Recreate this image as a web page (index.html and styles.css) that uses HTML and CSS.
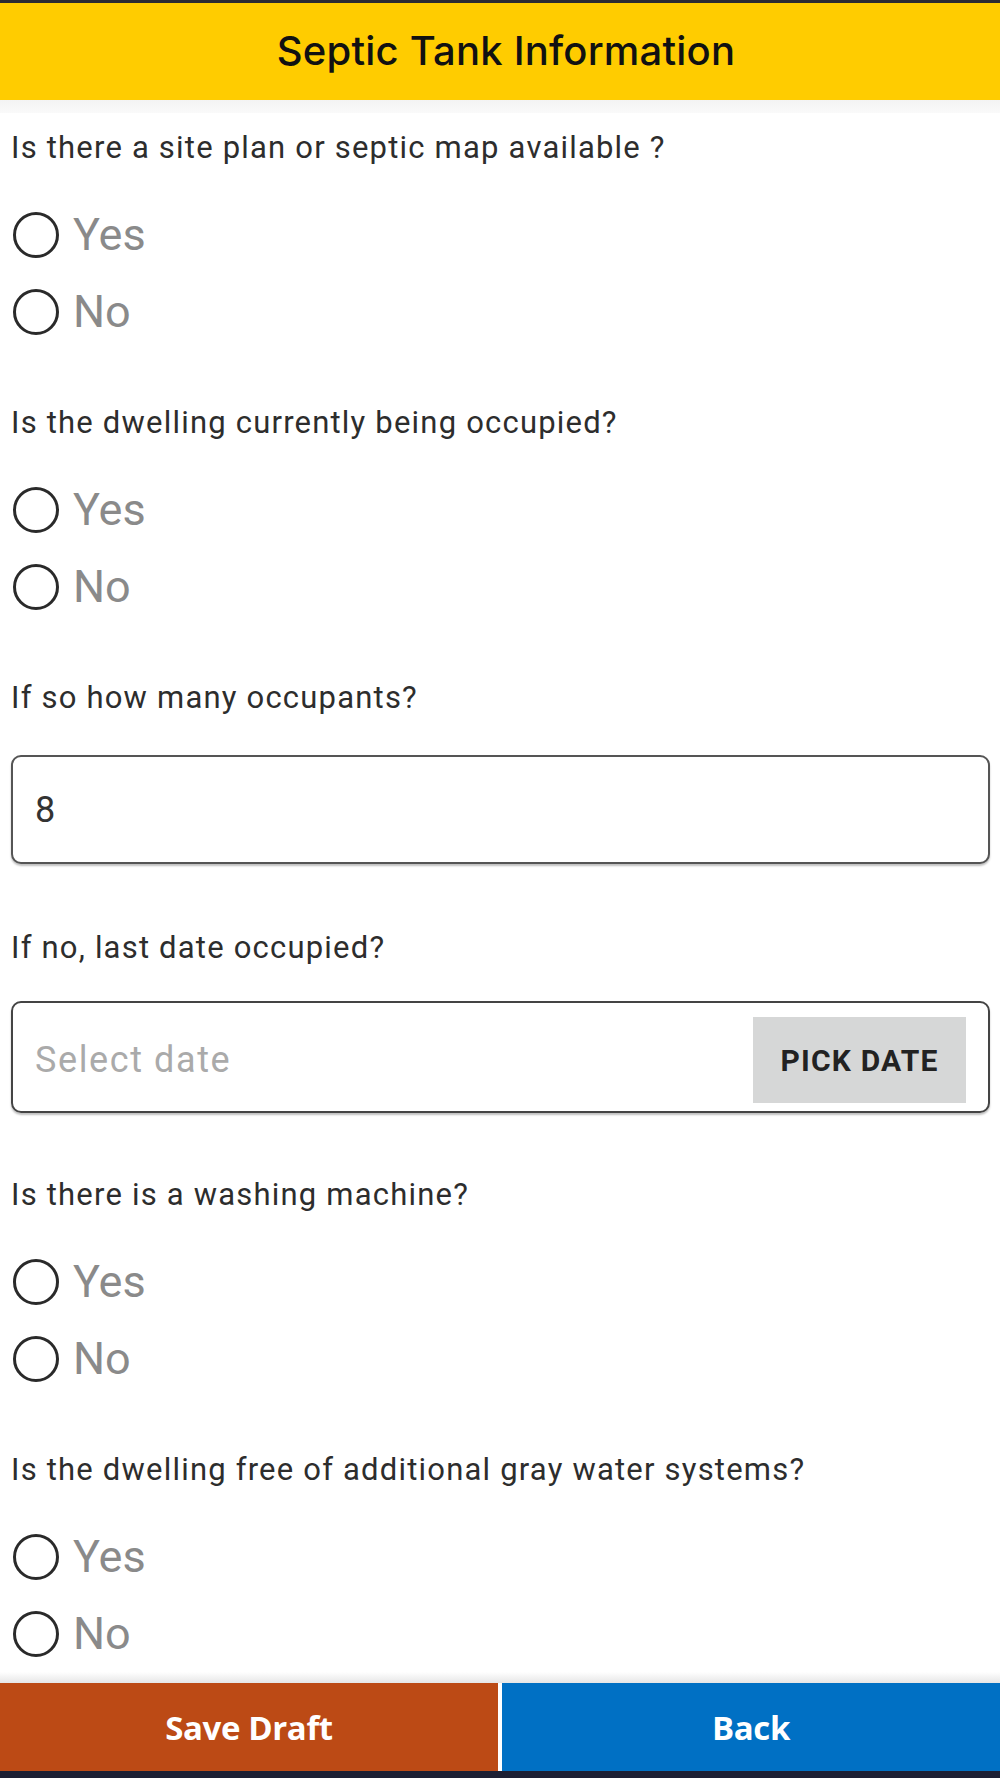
FILE: index.html
```html
<!DOCTYPE html>
<html lang="en">
<head>
    <meta charset="UTF-8">
    <meta name="viewport" content="width=device-width, initial-scale=1.0">
    <title>Septic Tank Information</title>
    <link rel="stylesheet" href="styles.css">
</head>
<body>
    <div class="screen">
        <div class="status-edge"></div>
        <header class="title-bar">
            <h1>Septic Tank Information</h1>
        </header>
        <div class="title-shade"></div>

        <main class="form">
            <div class="field">
                <p class="question">Is there a site plan or septic map available ?</p>
                <label class="option"><input type="radio" name="sitePlan" value="yes"><span>Yes</span></label>
                <label class="option"><input type="radio" name="sitePlan" value="no"><span>No</span></label>
            </div>

            <div class="field">
                <p class="question">Is the dwelling currently being occupied?</p>
                <label class="option"><input type="radio" name="occupied" value="yes"><span>Yes</span></label>
                <label class="option"><input type="radio" name="occupied" value="no"><span>No</span></label>
            </div>

            <div class="field field-input">
                <p class="question">If so how many occupants?</p>
                <input type="text" class="text-box" value="8">
            </div>

            <div class="field field-date">
                <p class="question">If no, last date occupied?</p>
                <div class="date-box">
                    <span class="placeholder">Select date</span>
                    <button type="button" class="pick-date">PICK DATE</button>
                </div>
            </div>

            <div class="field field-after-box">
                <p class="question">Is there is a washing machine?</p>
                <label class="option"><input type="radio" name="washer" value="yes"><span>Yes</span></label>
                <label class="option"><input type="radio" name="washer" value="no"><span>No</span></label>
            </div>

            <div class="field">
                <p class="question">Is the dwelling free of additional gray water systems?</p>
                <label class="option"><input type="radio" name="grayWater" value="yes"><span>Yes</span></label>
                <label class="option"><input type="radio" name="grayWater" value="no"><span>No</span></label>
            </div>
        </main>

        <div class="footer-shade"></div>
        <footer class="actions">
            <button type="button" class="btn btn-draft">Save Draft</button>
            <button type="button" class="btn btn-back">Back</button>
        </footer>
        <div class="nav-edge"></div>
    </div>
</body>
</html>
```

FILE: styles.css
```css
* {
    box-sizing: border-box;
}

body {
    margin: 0;
    font-family: Roboto, "Liberation Sans", sans-serif;
    background: #fff;
    color: #333;
}

.screen {
    display: flex;
    flex-direction: column;
    height: 100vh;
    overflow: hidden;
}

.status-edge {
    height: 3px;
    background: #2b2b33;
}

.title-bar {
    height: 97px;
    padding-left: 12px;
    background: #ffcc00;
    display: flex;
    align-items: center;
    justify-content: center;
}

.title-bar h1 {
    margin: 0;
    font-family: Inter, "Noto Sans", sans-serif;
    font-weight: 500;
    font-size: 40px;
    letter-spacing: 0.2px;
    color: #111;
    padding-bottom: 2px;
}

.title-shade {
    height: 13px;
    background: linear-gradient(#f3f3f3, #fafafa);
}

.form {
    flex: 1;
    overflow: hidden;
    padding: 15px 10px 0 11px;
}

.field + .field {
    margin-top: 53px;
}

.field-date {
    margin-top: 64px !important;
}

.field-after-box {
    margin-top: 62px !important;
}

.question {
    margin: 0 0 28px;
    font-size: 31px;
    letter-spacing: 1.2px;
    line-height: 40px;
    color: #2d2d2d;
}

.field-input .question {
    margin-bottom: 37px;
}

.field-date .question {
    margin-bottom: 33px;
}

.option {
    display: flex;
    align-items: center;
    height: 77px;
    margin-left: 2px;
    cursor: pointer;
}

.option input {
    appearance: none;
    -webkit-appearance: none;
    width: 46px;
    height: 46px;
    margin: 0 14px 0 0;
    border: 3px solid #2a2a2a;
    border-radius: 50%;
    background: #fff;
}

.option input:checked {
    background: radial-gradient(#2a2a2a 40%, #fff 44%);
}

.option span {
    font-size: 45px;
    color: #8a8a8a;
}

.text-box {
    display: block;
    width: 100%;
    height: 109px;
    padding: 0 22px;
    border: 2px solid #555;
    border-radius: 10px;
    box-shadow: 0 2px 2px rgba(0, 0, 0, 0.25);
    font-family: Roboto, "Liberation Sans", sans-serif;
    font-size: 36px;
    color: #333;
    outline: none;
}

.date-box {
    display: flex;
    align-items: center;
    justify-content: space-between;
    height: 112px;
    padding: 14px 22px 8px 22px;
    border: 2px solid #444;
    border-radius: 10px;
    box-shadow: 0 2px 2px rgba(0, 0, 0, 0.25);
}

.placeholder {
    font-size: 36px;
    letter-spacing: 1.6px;
    color: #aaa;
}

.pick-date {
    width: 213px;
    height: 86px;
    border: none;
    background: #d6d7d7;
    font-family: Roboto, "Liberation Sans", sans-serif;
    font-weight: 700;
    font-size: 30px;
    letter-spacing: 1.2px;
    color: #222;
}

.footer-shade {
    height: 11px;
    background: linear-gradient(rgba(255, 255, 255, 0), #e6e6e6);
}

.actions {
    display: flex;
    gap: 4px;
    height: 88px;
    background: #fff;
}

.btn {
    flex: 1;
    border: none;
    font-family: "Open Sans", "Noto Sans", sans-serif;
    font-weight: 700;
    font-size: 33px;
    letter-spacing: -0.4px;
    color: #fff;
}

.btn-draft {
    background: #bc4a15;
}

.btn-back {
    background: #0070c4;
}

.nav-edge {
    height: 7px;
    background: #1c1f33;
}
```
